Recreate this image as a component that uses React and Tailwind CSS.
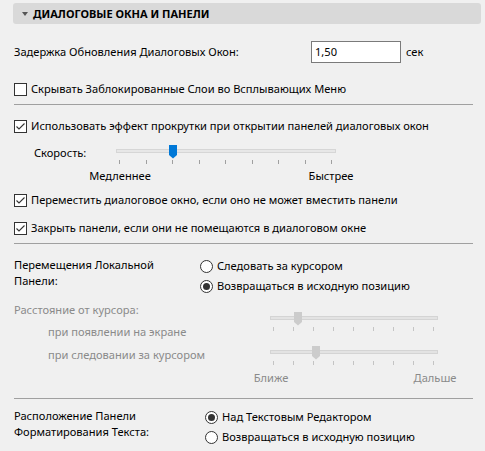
import React from "react";

const Checkbox = ({ checked }) => (
  <span className="w-[13px] h-[13px] border border-[#333333] bg-white flex items-center justify-center shrink-0">
    {checked && (
      <svg width="11" height="11" viewBox="0 0 11 11">
        <polyline points="1.5,5.5 4,8 9.5,2.5" fill="none" stroke="#333333" strokeWidth="1.1" />
      </svg>
    )}
  </span>
);

const Radio = ({ checked }) => (
  <span className="w-[13px] h-[13px] rounded-full border border-[#333333] bg-white flex items-center justify-center shrink-0">
    {checked && <span className="w-[7px] h-[7px] rounded-full bg-[#333333]" />}
  </span>
);

const CheckRow = ({ checked, children }) => (
  <div className="h-[20px] flex items-center gap-[4px]">
    <Checkbox checked={checked} />
    <span>{children}</span>
  </div>
);

const RadioRow = ({ checked, children }) => (
  <div className="h-[20px] flex items-center gap-[4px]">
    <Radio checked={checked} />
    <span>{children}</span>
  </div>
);

// thumb offset in px, 9 ticks
const Slider = ({ width, thumb, disabled }) => (
  <div className="relative" style={{ width }}>
    <div className={`h-[4px] border ${disabled ? "bg-[#e3e3e3] border-[#d4d4d4]" : "bg-[#e7e7e7] border-[#d6d6d6]"}`} />
    <svg className="absolute top-[-4px]" style={{ left: thumb }} width="8" height="14" viewBox="0 0 8 14">
      <path d="M0 0 H8 V10 L4 13.5 L0 10 Z" fill={disabled ? "#cccccc" : "#0078d7"} />
    </svg>
    <div className="flex justify-between pl-[3px] pr-[4px] mt-[7px]">
      {[0, 1, 2, 3, 4, 5, 6, 7, 8].map((i) => (
        <span key={i} className={`w-px h-[4px] ${disabled ? "bg-[#c4c4c4]" : "bg-[#a0a0a0]"}`} />
      ))}
    </div>
  </div>
);

const Separator = ({ className }) => <div className={`h-px bg-[#a0a0a0] mr-[12px] ${className}`} />;

export default function App() {
  return (
    <div className="w-[485px] h-[451px] bg-[#f0f0f0] overflow-hidden pt-[3px] text-[11.1px] leading-[16px] text-black font-['Noto_Sans',sans-serif]">
      {/* header */}
      <div className="ml-[13px] mr-[4px] h-[21px] rounded-[3px] bg-[#d9d9d9] flex items-center">
        <svg className="ml-[9px]" width="6" height="4" viewBox="0 0 6 4">
          <path d="M0 0 H6 L3 4 Z" fill="#555555" />
        </svg>
        <span className="ml-[5px] font-bold text-[11px]">ДИАЛОГОВЫЕ ОКНА И ПАНЕЛИ</span>
      </div>

      <div className="pl-[14px]">
        <div className="mt-[17px] h-[22px] flex items-center">
          <span className="w-[297px]">Задержка Обновления Диалоговых Окон:</span>
          <div className="w-[90px] h-[22px] border border-[#7a7a7a] bg-white flex items-center px-[3px]">1,50</div>
          <span className="ml-[5px]">сек</span>
        </div>

        <div className="mt-[16px]">
          <CheckRow>Скрывать Заблокированные Слои во Всплывающих Меню</CheckRow>
        </div>
        <Separator className="mt-[5px]" />

        <div className="mt-[11px]">
          <CheckRow checked>Использовать эффект прокрутки при открытии панелей диалоговых окон</CheckRow>
        </div>

        <div className="mt-[9px] flex">
          <span className="ml-[20px] w-[82px]">Скорость:</span>
          <div className="pt-[4px]">
            <Slider width={220} thumb={53} />
          </div>
        </div>
        <div className="mt-[4px] flex">
          <span className="ml-[66px] w-[80px] text-center">Медленнее</span>
          <span className="ml-[131px] w-[80px] text-center">Быстрее</span>
        </div>

        <div className="mt-[6px]">
          <CheckRow checked>Переместить диалоговое окно, если оно не может вместить панели</CheckRow>
        </div>
        <div className="mt-[8px]">
          <CheckRow checked>Закрыть панели, если они не помещаются в диалоговом окне</CheckRow>
        </div>
        <Separator className="mt-[5px]" />

        <div className="mt-[12px] flex">
          <div className="w-[186px] pt-[1px]">
            Перемещения Локальной
            <br />
            Панели:
          </div>
          <div>
            <RadioRow>Следовать за курсором</RadioRow>
            <RadioRow checked>Возвращаться в исходную позицию</RadioRow>
          </div>
        </div>

        <div className="mt-[6px] flex text-[#8a8a8a]">
          <div className="w-[256px]">
            <div>Расстояние от курсора:</div>
            <div className="mt-[6px] pl-[34px]">при появлении на экране</div>
            <div className="mt-[7px] pl-[34px]">при следовании за курсором</div>
          </div>
          <div className="pt-[14px]">
            <Slider width={168} thumb={24} disabled />
            <div className="mt-[19px]">
              <Slider width={168} thumb={42} disabled />
            </div>
            <div className="mt-[5px] -ml-[29px] w-[224px] flex">
              <span className="w-[60px] text-center">Ближе</span>
              <span className="ml-auto w-[60px] text-center">Дальше</span>
            </div>
          </div>
        </div>
        <Separator className="mt-[12px]" />

        <div className="mt-[8px] flex">
          <div className="w-[191px] pt-[1px]">
            Расположение Панели
            <br />
            Форматирования Текста:
          </div>
          <div>
            <RadioRow checked>Над Текстовым Редактором</RadioRow>
            <RadioRow>Возвращаться в исходную позицию</RadioRow>
          </div>
        </div>
      </div>
    </div>
  );
}
